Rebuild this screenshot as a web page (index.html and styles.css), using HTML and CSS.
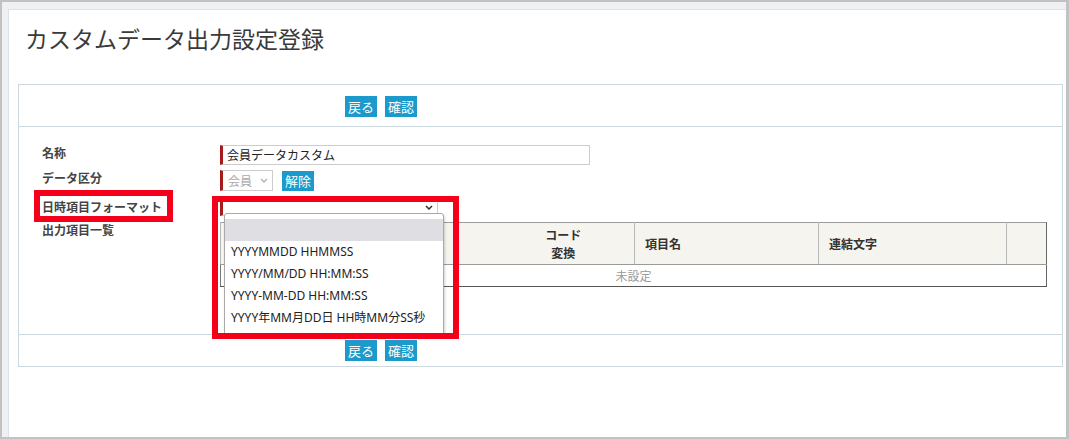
FILE: index.html
```html
<!DOCTYPE html>
<html lang="ja">
<head>
<meta charset="utf-8">
<title>カスタムデータ出力設定登録</title>
<link rel="stylesheet" href="styles.css">
</head>
<body>
<div class="frame">
  <div class="content">
    <h1 class="title">カスタムデータ出力設定登録</h1>
    <div class="panel">
      <div class="panel-head">
        <button class="btn">戻る</button>
        <button class="btn">確認</button>
      </div>
      <div class="panel-body">
        <div class="row r1">
          <div class="label">名称</div>
          <div class="val"><div class="input">会員データカスタム</div></div>
        </div>
        <div class="row r2">
          <div class="label">データ区分</div>
          <div class="val val-flex">
            <div class="select-sm"><span>会員</span>
              <svg class="chev" width="8" height="5" viewBox="0 0 8 5"><path d="M1 1 L4 4 L7 1" fill="none" stroke="#b0b0b0" stroke-width="1.3"/></svg>
            </div>
            <button class="btn btn-sm">解除</button>
          </div>
        </div>
        <div class="row r3">
          <div class="label">日時項目フォーマット<span class="mark mark-label"></span></div>
          <div class="val">
            <div class="select-date">
              <svg class="chev chev-date" width="8" height="5" viewBox="0 0 8 5"><path d="M1 1 L4 4 L7 1" fill="none" stroke="#333" stroke-width="1.5"/></svg>
            </div>
            <ul class="dropdown">
              <li class="opt sel">&nbsp;</li>
              <li class="opt">YYYYMMDD HHMMSS</li>
              <li class="opt">YYYY/MM/DD HH:MM:SS</li>
              <li class="opt">YYYY-MM-DD HH:MM:SS</li>
              <li class="opt">YYYY年MM月DD日 HH時MM分SS秒</li>
            </ul>
            <span class="mark mark-main"></span>
          </div>
        </div>
        <div class="row r4">
          <div class="label">出力項目一覧</div>
          <div class="val">
            <table class="tbl">
              <colgroup>
                <col class="c1"><col class="c2"><col class="c3"><col class="c4"><col class="c5">
              </colgroup>
              <thead>
                <tr>
                  <th class="th-left"></th>
                  <th class="th-center th-open">コード<br>変換</th>
                  <th class="th-left">項目名</th>
                  <th class="th-left">連結文字</th>
                  <th></th>
                </tr>
              </thead>
              <tbody>
                <tr><td class="empty" colspan="5">未設定</td></tr>
              </tbody>
            </table>
          </div>
        </div>
      </div>
      <div class="panel-foot">
        <button class="btn">戻る</button>
        <button class="btn">確認</button>
      </div>
    </div>
  </div>
</div>
</body>
</html>
```
FILE: styles.css
```css
* { box-sizing: border-box; }

body {
  margin: 0;
  background: #fff;
  color: #333;
  font-family: "Noto Sans CJK JP", "Noto Sans", sans-serif;
  font-size: 12px;
}

.frame {
  width: 1069px;
  height: 439px;
  border: 2px solid #c2c2c2;
  border-right-width: 3px;
  background: #eef0f1;
  padding: 7px 0 0 6px;
}

.content {
  height: 100%;
  background: #fff;
  border-top: 1px solid #dde4e9;
  border-left: 1px solid #dde4e9;
}

.title {
  margin: 0;
  height: 74px;
  padding: 13px 0 0 16px;
  font-size: 23px;
  line-height: 30px;
  font-weight: normal;
  color: #3a3a3a;
}

.panel {
  margin-left: 9px;
  width: 1045px;
  border: 1px solid #cbd8e0;
}

.panel-head {
  height: 42px;
  border-bottom: 1px solid #cbd8e0;
  padding: 11px 0 0 326px;
  display: flex;
  gap: 8px;
}

.panel-foot {
  height: 32px;
  border-top: 1px solid #cbd8e0;
  padding: 5px 0 0 326px;
  display: flex;
  gap: 8px;
}

.btn {
  height: 21px;
  padding: 0 3px;
  margin: 0;
  border: 0;
  background: #1b9acb;
  color: #fff;
  font-family: "Noto Sans CJK JP", sans-serif;
  font-size: 13px;
  line-height: 21px;
}

.btn-sm {
  height: 20px;
  line-height: 20px;
  margin-top: 1px;
}

.panel-body {
  height: 207px;
  padding: 18px 0 0 23px;
}

.row { display: flex; }
.r1 { height: 25px; }
.r2 { height: 29px; }
.r3 { height: 23px; }

.label {
  width: 178px;
  flex: none;
  font-weight: bold;
  line-height: 16px;
  color: #444;
  position: relative;
}

.val { position: relative; }

.val-flex {
  display: flex;
  gap: 9px;
  align-items: flex-start;
}

.input {
  width: 370px;
  height: 20px;
  border: 1px solid #ccc;
  border-left: 3px solid #a51c1c;
  padding-left: 4px;
  line-height: 18px;
  font-size: 12px;
  color: #222;
}

.select-sm {
  width: 53px;
  height: 21px;
  border: 1px solid #ccc;
  border-left: 3px solid #a51c1c;
  padding-left: 5px;
  display: flex;
  align-items: center;
  gap: 8px;
  color: #aaa;
  font-size: 12px;
}

.select-date {
  width: 218px;
  height: 17px;
  border: 1px solid #ccc;
  border-left: 3px solid #a51c1c;
  display: flex;
  justify-content: flex-end;
  align-items: center;
  padding-right: 4px;
}

.chev { display: block; }

.dropdown {
  position: absolute;
  left: 4px;
  top: 14px;
  width: 220px;
  height: 122px;
  margin: 0;
  padding: 5px 0 0 0;
  list-style: none;
  background: #fff;
  border: 1px solid #a9a9a9;
  border-radius: 3px 3px 0 0;
  box-shadow: 1px 2px 3px rgba(0, 0, 0, 0.18);
  z-index: 2;
  font-family: "Noto Sans", "Noto Sans CJK JP", sans-serif;
  font-size: 12px;
  color: #222;
}

.opt {
  height: 22px;
  line-height: 22px;
  padding-left: 6px;
  white-space: nowrap;
}

.opt.sel { background: #dedee3; }

.mark {
  position: absolute;
  border: 6px solid #f4001a;
  z-index: 3;
  pointer-events: none;
}

.mark-label {
  left: -8px;
  top: -9px;
  width: 139px;
  height: 32px;
}

.mark-main {
  left: -8px;
  top: -3px;
  width: 247px;
  height: 143px;
}

.tbl {
  width: 826px;
  border-collapse: collapse;
  table-layout: fixed;
  border-top: 1px solid #9a9a9a;
  border-left: 1px solid #777;
  border-right: 1px solid #666;
  border-bottom: 1px solid #555;
}

.c1 { width: 272px; }
.c2 { width: 142px; }
.c3 { width: 184px; }
.c4 { width: 188px; }
.c5 { width: 40px; }

.tbl th {
  height: 42px;
  padding: 0 10px;
  background: #f6f4ee;
  border-left: 1px solid #b8b8b8;
  border-bottom: 1px solid #9a9a9a;
  font-size: 12px;
  font-weight: bold;
  line-height: 18px;
  color: #333;
  vertical-align: middle;
}

.tbl th.th-open { border-left: 0; }

.th-left { text-align: left; }
.th-center { text-align: center; }

.tbl td.empty {
  height: 22px;
  padding: 0;
  text-align: center;
  color: #999;
  font-size: 12px;
  line-height: 20px;
}
```
